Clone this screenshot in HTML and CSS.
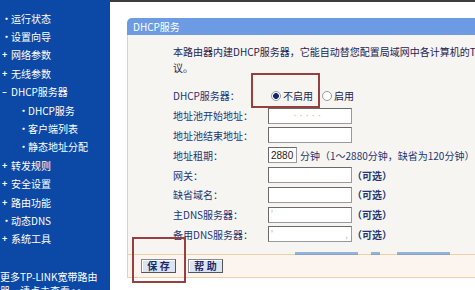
FILE: index.html
```
<!DOCTYPE html>
<html lang="zh-CN">

<head>
    <meta charset="UTF-8">
    <meta name="viewport" content="width=device-width, initial-scale=1.0">
    <title>DHCP服务</title>
    <link rel="stylesheet" href="styles.css">
</head>

<body>
    <div class="page">
        <nav class="sidebar">
            <ul class="menu">
                <li><span class="mk">•</span>运行状态</li>
                <li><span class="mk">•</span>设置向导</li>
                <li><span class="mk">+</span>网络参数</li>
                <li><span class="mk">+</span>无线参数</li>
                <li><span class="mk">–</span>DHCP服务器</li>
                <li class="sub"><span class="mk">•</span>DHCP服务</li>
                <li class="sub"><span class="mk">•</span>客户端列表</li>
                <li class="sub"><span class="mk">•</span>静态地址分配</li>
                <li><span class="mk">+</span>转发规则</li>
                <li><span class="mk">+</span>安全设置</li>
                <li><span class="mk">+</span>路由功能</li>
                <li><span class="mk">•</span>动态DNS</li>
                <li><span class="mk">+</span>系统工具</li>
            </ul>
            <div class="more">更多TP-LINK宽带路由<br>器，请点击查看 &gt;&gt;</div>
        </nav>

        <main class="main">
            <section class="panel">
                <div class="panel-title">DHCP服务</div>
                <div class="panel-body">
                    <p class="intro">本路由器内建DHCP服务器，它能自动替您配置局域网中各计算机的TCP/IP协<br>议。</p>

                    <div class="form">
                        <div class="row">
                            <span class="label">DHCP服务器：</span>
                            <span class="radio checked"></span><span class="radio-text">不启用</span>
                            <span class="radio second"></span><span class="radio-text">启用</span>
                        </div>
                        <div class="row">
                            <span class="label">地址池开始地址：</span>
                            <input class="field faint" type="text" value="        · · · · ·">
                        </div>
                        <div class="row">
                            <span class="label">地址池结束地址：</span>
                            <input class="field" type="text" value="">
                        </div>
                        <div class="row">
                            <span class="label">地址租期：</span>
                            <input class="field short" type="text" value="2880">
                            <span class="note">分钟（1～2880分钟，缺省为120分钟）</span>
                        </div>
                        <div class="row">
                            <span class="label">网关：</span>
                            <input class="field" type="text" value="">
                            <span class="opt">（可选）</span>
                        </div>
                        <div class="row">
                            <span class="label">缺省域名：</span>
                            <input class="field" type="text" value="">
                            <span class="opt">（可选）</span>
                        </div>
                        <div class="row">
                            <span class="label">主DNS服务器：</span>
                            <input class="field faint" type="text" value="'">
                            <span class="opt">（可选）</span>
                        </div>
                        <div class="row">
                            <span class="label">备用DNS服务器：</span>
                            <input class="field faint" type="text" value="'                          ,">
                            <span class="opt">（可选）</span>
                        </div>
                    </div>
                </div>
                <div class="panel-foot">
                    <button class="btn">保 存</button>
                    <button class="btn">帮 助</button>
                </div>
            </section>
        </main>

        <!-- highlight boxes drawn over the screenshot -->
        <div class="mark mark-radio"></div>
        <div class="mark mark-save"></div>
        <div class="watermark"></div>
    </div>
</body>

</html>
```

FILE: styles.css
```
body {
    margin: 0;
    padding: 0;
    font-family: "Noto Sans CJK SC", "Liberation Sans", sans-serif;
    font-size: 10px;
    background-color: #fff;
    overflow: hidden;
}

.page {
    position: relative;
    display: flex;
    width: 475px;
    height: 290px;
    overflow: hidden;
}

.sidebar {
    width: 110px;
    flex-shrink: 0;
    box-sizing: border-box;
    padding-top: 9px;
    background-color: #0c49a6;
    color: #fff;
}

.menu {
    list-style: none;
    margin: 0;
    padding: 0;
}

.menu li {
    display: flex;
    align-items: center;
    height: 18.4px;
    padding-left: 2px;
    white-space: nowrap;
}

.menu li.sub {
    padding-left: 19px;
}

.mk {
    display: inline-block;
    width: 9px;
    font-size: 9px;
    font-weight: bold;
    text-align: left;
}

.more {
    margin-top: 22px;
    line-height: 14px;
    white-space: nowrap;
}

.main {
    flex: 1;
    min-width: 0;
    border-top: 2px solid #3d3d3d;
    padding: 16px 0 0 17px;
    background-color: #fff;
}

.panel-title {
    height: 17px;
    line-height: 17px;
    padding-left: 6px;
    background-color: #6c9be4;
    color: #fff;
    border-top-left-radius: 5px;
}

.panel-body {
    padding: 9px 0 10px 45px;
    border-left: 1px solid #ddd5c4;
    background-color: #f6f5f1;
    color: #233473;
}

.intro {
    margin: 0;
    line-height: 16px;
    white-space: nowrap;
    color: #1c2452;
}

.form {
    margin-top: 10px;
}

.row {
    display: flex;
    align-items: center;
    height: 19.8px;
    white-space: nowrap;
}

.label {
    width: 95px;
    flex-shrink: 0;
}

.radio {
    width: 10px;
    height: 10px;
    box-sizing: border-box;
    margin-left: 3px;
    border: 1px solid #9a9a9a;
    border-radius: 50%;
    background-color: #fff;
}

.radio.checked {
    background: radial-gradient(circle, #16267a 0 2.6px, #fff 3.2px);
}

.radio.second {
    margin-left: 9px;
}

.radio-text {
    margin-left: 2px;
    color: #1c2452;
}

.field {
    width: 84px;
    height: 16px;
    box-sizing: border-box;
    margin: 0;
    padding: 0 2px;
    border: 1px solid #9a9a9a;
    border-top-color: #6a6a6a;
    border-left-color: #6a6a6a;
    background-color: #fff;
    font-family: "Liberation Sans", sans-serif;
    font-size: 10px;
    color: #222;
}

.field.faint {
    color: #b9b9b9;
}

.field.short {
    width: 29px;
}

.note {
    margin-left: 3px;
}

.opt {
    margin-left: 0;
    font-weight: bold;
}

.panel-foot {
    display: flex;
    gap: 12px;
    height: 24px;
    box-sizing: border-box;
    padding: 4px 0 0 13px;
    border-left: 1px solid #ddd5c4;
    border-top: 1px solid #efcfa6;
    border-bottom: 1px solid #efcfa6;
    background-color: #fcf4ee;
}

.btn {
    width: 35px;
    height: 14px;
    padding: 0;
    border: 1px solid #555;
    border-top-color: #8a8a8a;
    border-left-color: #8a8a8a;
    background-color: #dce3f2;
    box-shadow: inset 1px 1px 0 #fff;
    font-family: "Noto Sans CJK SC", sans-serif;
    font-size: 10px;
    font-weight: bold;
    line-height: 12px;
    color: #1b2a66;
}

.mark {
    position: absolute;
    border: 2px solid #983f3f;
}

.mark-radio {
    left: 251px;
    top: 73px;
    width: 65px;
    height: 31px;
}

.mark-save {
    left: 132px;
    top: 237px;
    width: 50px;
    height: 42px;
}

.watermark {
    position: absolute;
    left: 295px;
    top: 252px;
    width: 155px;
    height: 3px;
    opacity: 0.55;
    background: linear-gradient(90deg, #3d7fcc 0 63px, transparent 63px 76px, #3d7fcc 76px 85px, transparent 85px 102px, #3d7fcc 102px 155px);
}
```
